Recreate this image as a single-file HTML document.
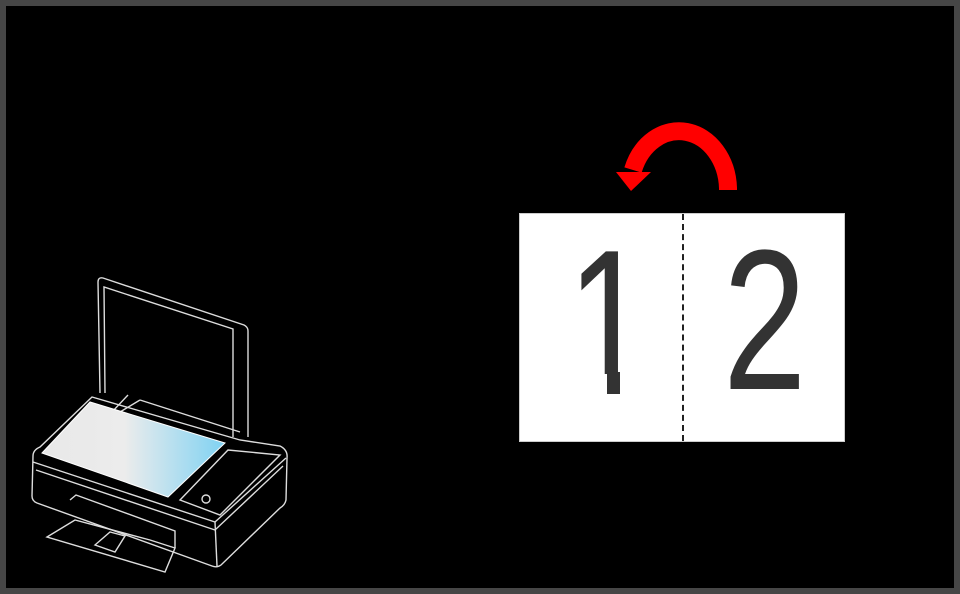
<!DOCTYPE html>
<html><head><meta charset="utf-8"><style>
html,body{margin:0;padding:0;background:#000;}
.f{position:relative;width:960px;height:594px;box-sizing:border-box;border:6px solid #464646;background:#000;overflow:hidden;}
.card{position:absolute;left:513px;top:207px;width:326px;height:229px;background:#fff;border:1px solid #ccc;box-sizing:border-box;overflow:hidden;}
.dash{position:absolute;left:162px;top:0;height:100%;border-left:2px dashed #222;}
.n{position:absolute;font-family:"Liberation Sans",sans-serif;font-size:200px;line-height:1;color:#333;transform:scaleX(0.75);transform-origin:0 0;}
</style></head><body><div class="f">
<div class="card">
<div class="n" style="left:47px;top:7px;">1</div>
<div class="n" style="left:203px;top:7px;">2</div>
<div style="position:absolute;left:40px;top:160px;width:110px;height:30px;background:#fff"></div>
<div style="position:absolute;left:87px;top:158px;width:13px;height:22px;background:#333"></div>
<div class="dash"></div>
</div>
<svg width="960" height="594" style="position:absolute;left:-6px;top:-6px">
<path d="M728 190 L728 188 A49 59 0 0 0 633 170" fill="none" stroke="#f00" stroke-width="18"/>
<polygon points="616,172 651,172 631,191" fill="#f00"/>
<defs><linearGradient id="g" x1="0" x2="1" y1="0" y2="0">
<stop offset="0" stop-color="#e8e8e8"/><stop offset="0.45" stop-color="#ececec"/><stop offset="1" stop-color="#7fd2f2"/></linearGradient></defs>
<g fill="none" stroke="#ddd" stroke-width="1.4">
<path d="M100 393 L98 282 Q98 277 103 278 L244 325 Q248 327 248 331 L248 437"/>
<path d="M105 393 L104 287 L233 329 L233 437"/>
<path d="M33 456 Q33 450 40 447 L92 397 L240 440 L280 446 Q288 450 287 458 L286 500 Q285 505 280 508 L221 565 Q217 568 212 566 L37 503 Q32 501 32 496 Z"/>
<path d="M33 462 L215 522 L286 458"/>
<path d="M36 470 L215 530 L283 466"/>
<path d="M215 522 L217 566"/>
<path d="M70 500 L76 495 L175 531 L175 548"/>
<path d="M47 537 L75 520 L150 540 L175 548 L165 572 L47 537 Z"/>
<path d="M95 545 L110 532 L125 536 L115 552 Z"/>
<path d="M180 500 L228 450 L280 455 L220 515 Z"/>
<circle cx="206" cy="499" r="4"/>
<path d="M112 412 L128 395 M120 412 L140 400 M140 400 L240 432"/>
</g>
<polygon points="42,453 90,402 225,443 168,497" fill="url(#g)" stroke="#fff" stroke-width="1"/>
</svg>
</div></body></html>
